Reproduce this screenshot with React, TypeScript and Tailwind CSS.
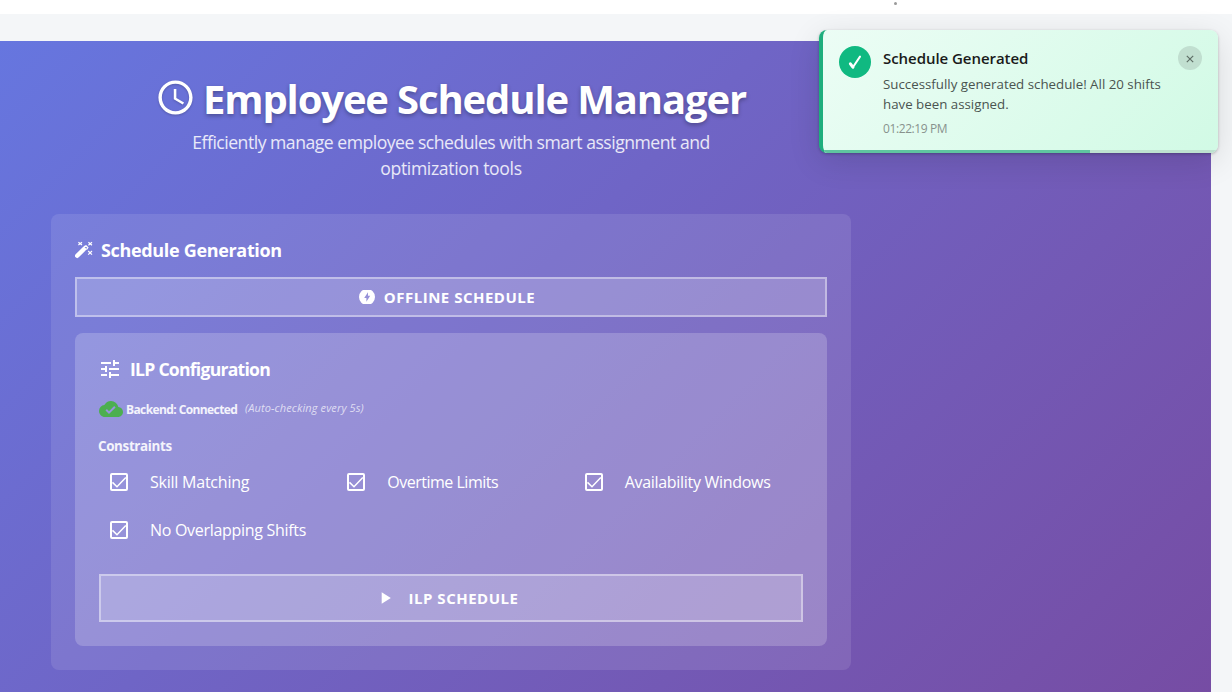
import { MdAccessTime, MdTune, MdCloudDone, MdPlayArrow } from "react-icons/md";

const constraints = [
  { label: "Skill Matching", tracking: "tracking-[-0.23px]" },
  { label: "Overtime Limits", tracking: "tracking-[-0.5px]" },
  { label: "Availability Windows", tracking: "tracking-[-0.3px]" },
  { label: "No Overlapping Shifts", tracking: "tracking-[-0.3px]" },
];

function CheckBoxIcon() {
  return (
    <svg viewBox="0 0 24 24" fill="none" stroke="#fff" className="mr-[19px] size-6 shrink-0">
      <rect x="4" y="4" width="16" height="16" rx="1" strokeWidth="2" />
      <path d="M5.5 12.4 10 16.8 18.8 7.6" strokeWidth="1.5" />
    </svg>
  );
}

function WandIcon() {
  return (
    <svg width="19" height="18" viewBox="0 0 19 18" fill="none" stroke="#fff" className="mr-[7px] shrink-0">
      <path d="M2.2 14.8 8.8 8.2" strokeWidth="4.4" strokeLinecap="round" />
      <path d="M8.8 5.9 11 4.7 12.8 6.5 11.4 8.6" strokeWidth="1.3" />
      <path d="M3.4 1.3 7 4M7 1.3 3.4 4M13.4 1.3 17 4.2M17 1.3 13.4 4.2M13.2 10 17 13.6M17 10 13.2 13.6" strokeWidth="1.2" />
    </svg>
  );
}

function BoltIcon() {
  return (
    <svg width="16" height="14" viewBox="0 1 16 14" className="mr-[9px] shrink-0">
      <path fill="#fff" fillRule="evenodd" d="M8 0a8 8 0 1 0 0 16A8 8 0 0 0 8 0Zm1 3.2v3.6h2.2L7.4 12.7V8.9H5.2Z" />
    </svg>
  );
}

function Toast() {
  return (
    <div className="absolute left-[819px] top-[30px] flex h-[123px] w-[399px] overflow-hidden rounded-lg border-l-4 border-[#1fae7d] bg-linear-135 from-[#ecfdf5] to-[#d1fae5] pl-4 pt-4 shadow-[0_8px_32px_rgba(0,0,0,0.12),0_1px_3px_rgba(0,0,0,0.25)]">
      <div className="flex size-8 shrink-0 items-center justify-center rounded-full bg-[#10b981]">
        <svg width="14" height="16" viewBox="0 0 14 16" fill="none" stroke="#fff" strokeLinecap="round" strokeLinejoin="round">
          <path d="M2.4 9.8 4.9 13.2" strokeWidth="3" />
          <path d="M4.9 13.2 12 2.6" strokeWidth="2" />
        </svg>
      </div>
      <div className="ml-3 w-[284px] whitespace-nowrap">
        <div className="h-6 text-[15px] font-semibold leading-6 tracking-[-0.05px] text-[#1a1a1a]">Schedule Generated</div>
        <div className="mt-1 text-[13.3px] leading-5 text-[#4a5450]">
          <div>Successfully generated schedule! All 20 shifts</div>
          <div>have been assigned.</div>
        </div>
        <div className="mt-[7px] text-[12px] leading-4 tracking-[-0.4px] text-[#88928d]">01:22:19 PM</div>
      </div>
      <div className="ml-[11px] flex size-6 items-center justify-center rounded-full bg-[#c1dfd0]">
        <svg width="8" height="8" viewBox="0 0 8 8" stroke="#5f6f67" strokeWidth="1.2" className="mt-[2px]">
          <path d="M.8.8 7.2 7.2M7.2.8.8 7.2" />
        </svg>
      </div>
      <div className="absolute bottom-0 left-0 h-[3px] w-full bg-[#bee2d0]">
        <div className="h-full w-[267px] bg-[#5fc5a0]" />
      </div>
    </div>
  );
}

export default function App() {
  return (
    <div className="relative h-[692px] w-[1232px] overflow-hidden bg-[#f4f6f8] font-['Open_Sans','Noto_Sans',sans-serif]">
      <div className="h-[14px] bg-white pl-[894px] pt-[2px]">
        <div className="size-[3px] rounded-full bg-[#9a9a9a]" />
      </div>
      <main className="mt-[27px] h-[700px] w-[1211px] bg-linear-135 from-[#6676df] to-[#764ba2] pl-[51px] pt-[34px] text-white">
        <div className="w-[800px]">
          <header className="flex h-[139px] flex-col items-center whitespace-nowrap">
            <h1 className="flex h-[50px] w-[592px] items-center text-[40px] font-bold leading-[50px] tracking-[-1.14px] [text-shadow:0_2px_4px_rgba(0,0,0,0.3)]">
              <MdAccessTime className="-mt-[5px] mr-[7px] size-[41px] shrink-0 drop-shadow-[0_1px_1px_rgba(0,0,0,0.2)]" />
              <span className="mt-[-3px]">Employee Schedule Manager</span>
            </h1>
            <p className="mt-1 text-center text-[17.6px] leading-[26px] text-white/85">
              <span className="tracking-[-0.49px]">Efficiently manage employee schedules with smart assignment and</span>
              <br />
              <span className="tracking-[-0.35px]">optimization tools</span>
            </p>
          </header>
          <section className="h-[456px] rounded-lg bg-white/10 px-6 pt-6">
            <h2 className="flex h-6 items-center text-[18px] font-bold leading-6 tracking-[-0.33px]">
              <WandIcon />
              <span>Schedule Generation</span>
            </h2>
            <button className="mt-[15px] flex h-10 w-full items-center justify-center border-2 border-white/40 bg-white/20 pr-2 text-[15px] font-bold tracking-[0.5px]">
              <BoltIcon />
              <span>OFFLINE SCHEDULE</span>
            </button>
            <section className="mt-4 h-[313px] rounded-lg bg-white/20 px-6 pt-6">
              <h3 className="flex h-6 items-center text-[17.6px] font-bold leading-6 tracking-[-0.75px]">
                <MdTune className="-ml-px mr-2 size-6" />
                <span>ILP Configuration</span>
              </h3>
              <div className="mt-4 flex h-6 items-center whitespace-nowrap">
                <MdCloudDone className="mr-[3px] size-6 text-[#4caf50]" />
                <span className="mt-px w-[111px] text-[12px] font-bold tracking-[-0.6px] text-white/90">Backend: Connected</span>
                <span className="ml-2 mt-[-2px] text-[11px] italic tracking-[0.12px] text-white/70">(Auto-checking every 5s)</span>
              </div>
              <div className="-ml-px mt-[15px] h-5 text-[13.4px] font-bold leading-5 tracking-[-0.35px] text-white/90">Constraints</div>
              <div className="mt-[2px] grid grid-cols-3 gap-x-2">
                {constraints.map((c) => (
                  <label key={c.label} className="flex h-12 items-center whitespace-nowrap pl-2">
                    <CheckBoxIcon />
                    <span className={"text-[16px] " + c.tracking}>{c.label}</span>
                  </label>
                ))}
              </div>
              <button className="mt-5 flex h-12 w-full items-center justify-center border-2 border-white/40 bg-white/20 pr-[9px] text-[15px] font-bold tracking-[0.5px]">
                <MdPlayArrow className="mr-[14px] size-5" />
                <span>ILP SCHEDULE</span>
              </button>
            </section>
          </section>
        </div>
      </main>
      <Toast />
    </div>
  );
}
